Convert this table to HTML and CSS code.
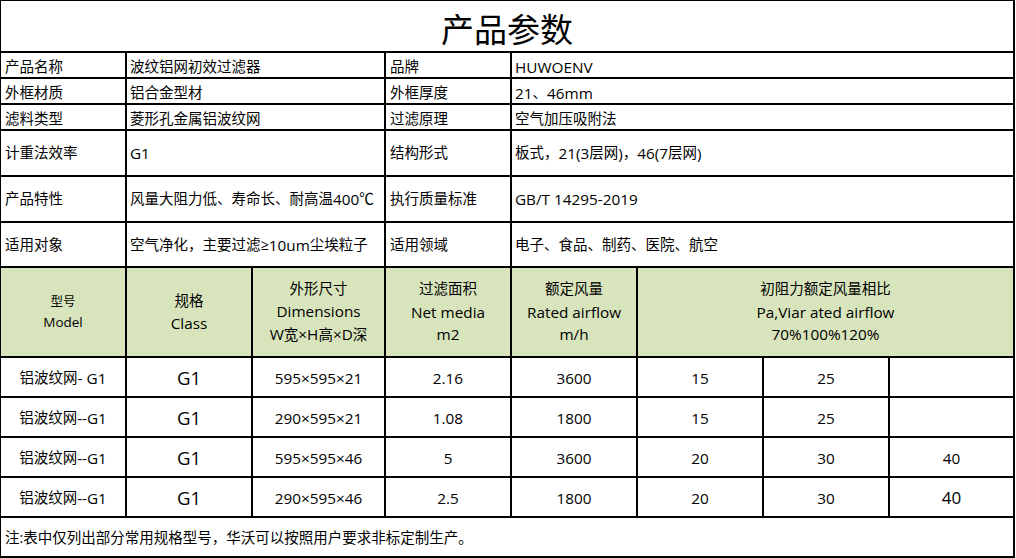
FILE: index.html
```html
<!DOCTYPE html>
<html lang="zh-CN">
<head>
<meta charset="utf-8">
<title>产品参数</title>
<link rel="stylesheet" href="styles.css">
</head>
<body>
<div class="sheet">
  <div class="title">产品参数</div>

  <div class="c lbl short">产品名称</div>
  <div class="c val-a short">波纹铝网初效过滤器</div>
  <div class="c lbl short">品牌</div>
  <div class="c val-b short en">HUWOENV</div>

  <div class="c lbl short">外框材质</div>
  <div class="c val-a short">铝合金型材</div>
  <div class="c lbl short">外框厚度</div>
  <div class="c val-b short"><span class="en">21</span>、<span class="en">46mm</span></div>

  <div class="c lbl short">滤料类型</div>
  <div class="c val-a short">菱形孔金属铝波纹网</div>
  <div class="c lbl short">过滤原理</div>
  <div class="c val-b short">空气加压吸附法</div>

  <div class="c lbl">计重法效率</div>
  <div class="c val-a en">G1</div>
  <div class="c lbl">结构形式</div>
  <div class="c val-b">板式，<span class="en">21(3</span>层网<span class="en">)</span>，<span class="en">46(7</span>层网<span class="en">)</span></div>

  <div class="c lbl">产品特性</div>
  <div class="c val-a">风量大阻力低、寿命长、耐高温<span class="en">400</span>℃</div>
  <div class="c lbl">执行质量标准</div>
  <div class="c val-b en">GB/T 14295-2019</div>

  <div class="c lbl">适用对象</div>
  <div class="c val-a">空气净化，主要过滤≥<span class="en">10um</span>尘埃粒子</div>
  <div class="c lbl">适用领域</div>
  <div class="c val-b">电子、食品、制药、医院、航空</div>

  <div class="c hd small"><span>型号</span><span class="en">Model</span></div>
  <div class="c hd"><span>规格</span><span class="en">Class</span></div>
  <div class="c hd"><span>外形尺寸</span><span class="en">Dimensions</span><span><span class="en">W</span>宽<span class="en">×H</span>高<span class="en">×D</span>深</span></div>
  <div class="c hd"><span>过滤面积</span><span class="en">Net media</span><span class="en">m2</span></div>
  <div class="c hd"><span>额定风量</span><span class="en">Rated airflow</span><span class="en">m/h</span></div>
  <div class="c hd wide"><span>初阻力额定风量相比</span><span class="en">Pa,Viar ated airflow</span><span class="en">70%100%120%</span></div>

  <div class="c d">铝波纹网<span class="en">- G1</span></div>
  <div class="c d big">G1</div>
  <div class="c d en">595×595×21</div>
  <div class="c d en">2.16</div>
  <div class="c d en">3600</div>
  <div class="c d en">15</div>
  <div class="c d en">25</div>
  <div class="c d"></div>

  <div class="c d">铝波纹网<span class="en">--G1</span></div>
  <div class="c d big">G1</div>
  <div class="c d en">290×595×21</div>
  <div class="c d en">1.08</div>
  <div class="c d en">1800</div>
  <div class="c d en">15</div>
  <div class="c d en">25</div>
  <div class="c d"></div>

  <div class="c d">铝波纹网<span class="en">--G1</span></div>
  <div class="c d big">G1</div>
  <div class="c d en">595×595×46</div>
  <div class="c d en">5</div>
  <div class="c d en">3600</div>
  <div class="c d en">20</div>
  <div class="c d en">30</div>
  <div class="c d en">40</div>

  <div class="c d">铝波纹网<span class="en">--G1</span></div>
  <div class="c d big">G1</div>
  <div class="c d en">290×595×46</div>
  <div class="c d en">2.5</div>
  <div class="c d en">1800</div>
  <div class="c d en">20</div>
  <div class="c d en">30</div>
  <div class="c d mid">40</div>

  <div class="c foot">注:表中仅列出部分常用规格型号，华沃可以按照用户要求非标定制生产。</div>
</div>
</body>
</html>
```

FILE: styles.css
```css
html, body {
  margin: 0;
  padding: 0;
  background: #ffffff;
}

body {
  font-family: "Open Sans", "Noto Sans CJK SC", sans-serif;
  font-size: 14.5px;
  color: #000000;
}

.sheet {
  width: 1015px;
  height: 558px;
  box-sizing: border-box;
  padding: 1px 2px 2px 1px;
  background: #000000;
  display: grid;
  grid-template-columns: 124px 124px 131px 124px 124px 124px 124px 123px;
  grid-template-rows: 50px 24px 24px 24px 44px 44px 43px 88px 38px 38px 38px 38px 38px;
  gap: 2px;
}

.c {
  background: #ffffff;
  display: flex;
  align-items: center;
  white-space: nowrap;
  overflow: hidden;
  line-height: 18px;
}

.en {
  font-size: 15.3px;
}

.title {
  grid-column: 1 / -1;
  background: #ffffff;
  display: flex;
  align-items: center;
  justify-content: center;
  font-family: "Noto Sans CJK SC", sans-serif;
  font-size: 33px;
  line-height: 40px;
  padding-top: 3px;
  box-sizing: border-box;
}

.lbl {
  padding-left: 4px;
}

.val-a {
  grid-column: span 2;
  padding-left: 3px;
}

.val-b {
  grid-column: span 4;
  padding-left: 3px;
}

.short {
  padding-top: 3px;
  box-sizing: border-box;
}

.hd {
  background: #d8e4bc;
  flex-direction: column;
  justify-content: center;
  line-height: 22.5px;
  text-align: center;
}

.hd.small {
  font-size: 12.5px;
  line-height: 20px;
}

.hd.small .en {
  font-size: 13.5px;
}

.hd.wide {
  grid-column: span 3;
}

.d {
  justify-content: center;
  padding-top: 2px;
  box-sizing: border-box;
}

.d.big {
  font-size: 18.5px;
}

.d.mid {
  font-size: 17px;
}

.foot {
  grid-column: 1 / -1;
  padding-left: 4px;
  padding-top: 2px;
  box-sizing: border-box;
}
```
